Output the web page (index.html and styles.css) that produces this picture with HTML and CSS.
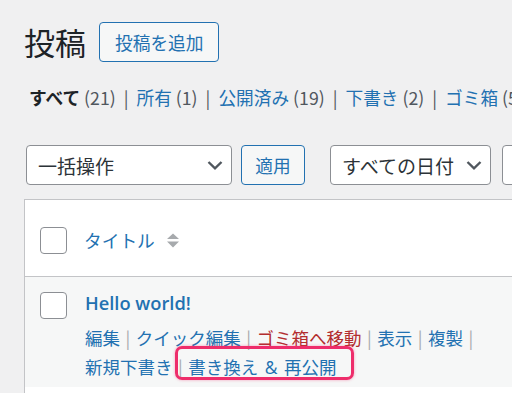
FILE: index.html
```html
<!DOCTYPE html>
<html lang="ja">
<head>
<meta charset="utf-8">
<title>投稿</title>
<link rel="stylesheet" href="styles.css">
</head>
<body>
<div class="wrap">
  <div class="page-head">
    <h1 class="page-title">投稿</h1>
    <a class="btn btn-outline" href="#">投稿を追加</a>
  </div>

  <ul class="subsubsub">
    <li><span class="current">すべて</span> <span class="count">(21)</span></li>
    <li class="sep">|</li>
    <li><a href="#">所有 <span class="count">(1)</span></a></li>
    <li class="sep">|</li>
    <li><a href="#">公開済み <span class="count">(19)</span></a></li>
    <li class="sep">|</li>
    <li><a href="#">下書き <span class="count">(2)</span></a></li>
    <li class="sep">|</li>
    <li><a href="#">ゴミ箱 <span class="count">(5)</span></a></li>
  </ul>

  <div class="tablenav">
    <div class="select select-bulk"><span>一括操作</span>
      <svg class="chev" width="16" height="10" viewBox="0 0 16 10"><path d="M1.5 2 L8 8.3 L14.5 2" fill="none" stroke="#50575e" stroke-width="2.4"/></svg>
    </div>
    <a class="btn btn-outline btn-apply" href="#">適用</a>
    <div class="select select-date"><span>すべての日付</span>
      <svg class="chev" width="16" height="10" viewBox="0 0 16 10"><path d="M1.5 2 L8 8.3 L14.5 2" fill="none" stroke="#50575e" stroke-width="2.4"/></svg>
    </div>
    <div class="select select-cat"></div>
  </div>

  <div class="list-table">
    <div class="thead">
      <span class="checkbox"></span>
      <a class="col-title" href="#">タイトル
        <svg class="sort" width="12" height="15" viewBox="0 0 12 15"><path d="M6 0.5 L12 6 L0 6 Z M0 8.5 L12 8.5 L6 14.5 Z" fill="#a7aaad"/></svg>
      </a>
    </div>
    <div class="row striped">
      <span class="checkbox row-check"></span>
      <div class="row-body">
        <a class="row-title" href="#">Hello world!</a>
        <div class="row-actions">
          <a href="#">編集</a><span class="sep">|</span><a href="#">クイック編集</a><span class="sep">|</span><a class="trash" href="#">ゴミ箱へ移動</a><span class="sep">|</span><a href="#">表示</a><span class="sep">|</span><a href="#">複製</a><span class="sep">|</span>
        </div>
        <div class="row-actions second">
          <a href="#">新規下書き</a><span class="sep">|</span><a href="#">書き換え<span class="amp"> &amp; </span>再公開</a>
          <span class="highlight"></span>
        </div>
      </div>
    </div>
    <div class="row plain"></div>
  </div>
</div>
</body>
</html>
```

FILE: styles.css
```css
html, body {
  margin: 0;
  padding: 0;
  overflow: hidden;
}

body {
  background: #f0f0f1;
  color: #1d2327;
  font-family: "Noto Sans CJK JP", "Noto Sans", sans-serif;
  font-size: 17.7px;
  width: 512px;
  height: 393px;
}

a {
  color: #2271b1;
  text-decoration: none;
}

.wrap {
  padding: 22px 0 0 24px;
  width: 620px;
}

.page-head {
  display: flex;
  align-items: center;
  height: 40px;
}

.page-title {
  margin: 0 13px 0 0;
  font-size: 31px;
  font-weight: 400;
  line-height: 40px;
  color: #1d2327;
}

.btn {
  display: inline-flex;
  align-items: center;
  justify-content: center;
  box-sizing: border-box;
  height: 40px;
  border-radius: 4px;
  font-size: 17.7px;
}

.btn-outline {
  border: 1px solid #2271b1;
  color: #2271b1;
  background: #f6f7f7;
  padding: 0 15px;
}

.subsubsub {
  list-style: none;
  margin: 22px 0 0 5px;
  padding: 0;
  display: flex;
  white-space: nowrap;
  line-height: 26px;
  height: 26px;
}

.subsubsub li.sep {
  color: #50575e;
  margin: 0 8px;
}

.current {
  font-weight: 700;
  color: #1d2327;
}

.count {
  color: #50575e;
}

.tablenav {
  display: flex;
  align-items: center;
  margin: 35px 0 0 2px;
  height: 40px;
}

.select {
  box-sizing: border-box;
  height: 40px;
  border: 1px solid #8c8f94;
  border-radius: 4px;
  background: #fff;
  display: flex;
  align-items: center;
  justify-content: space-between;
  padding: 0 8px 0 11px;
  font-size: 19px;
  color: #2c3338;
}

.select-bulk {
  width: 206px;
}

.btn-apply {
  margin-left: 9px;
  width: 64px;
  padding: 0;
}

.select-date {
  width: 161px;
  margin-left: 25px;
}

.select-cat {
  width: 140px;
  margin-left: 11px;
}

.list-table {
  margin-top: 14px;
  border: 1px solid #c3c4c7;
  border-right: 0;
  background: #fff;
}

.thead {
  display: flex;
  align-items: flex-start;
  box-sizing: border-box;
  height: 77px;
  padding: 27px 0 0 15px;
  border-bottom: 1px solid #c3c4c7;
  background: #fff;
}

.checkbox {
  display: block;
  flex: none;
  box-sizing: border-box;
  width: 27px;
  height: 27px;
  border: 1px solid #8c8f94;
  border-radius: 4px;
  background: #fff;
}

.col-title {
  display: flex;
  align-items: center;
  margin-left: 17px;
  line-height: 26px;
  font-size: 17.7px;
}

.sort {
  margin-left: 12px;
}

.row {
  display: flex;
  align-items: flex-start;
  padding-left: 15px;
}

.striped {
  background: #f6f7f7;
  height: 110px;
}

.plain {
  background: #fff;
  height: 40px;
}

.row-check {
  margin-top: 15px;
}

.row-body {
  margin-left: 18px;
  padding-top: 11px;
}

.row-title {
  display: block;
  font-family: "Open Sans", "Noto Sans", sans-serif;
  font-weight: 600;
  font-size: 18.3px;
  line-height: 30px;
  height: 30px;
}

.row-actions {
  line-height: 29px;
  height: 29px;
  white-space: nowrap;
  font-size: 17.5px;
}

.row-title + .row-actions {
  margin-top: 5px;
}

.row-actions .sep {
  color: #a7aaad;
  margin: 0 5.5px;
}

.amp {
  font-family: "Open Sans", sans-serif;
  margin: 0 2px;
}

.trash {
  color: #b32d2e;
}

.second {
  position: relative;
}

.highlight {
  position: absolute;
  left: 90px;
  top: -6px;
  width: 179px;
  height: 34px;
  box-sizing: border-box;
  border: 3px solid #ee2d6b;
  border-radius: 7px;
  box-shadow: 0 0 3px rgba(238, 45, 107, 0.45);
}
```
